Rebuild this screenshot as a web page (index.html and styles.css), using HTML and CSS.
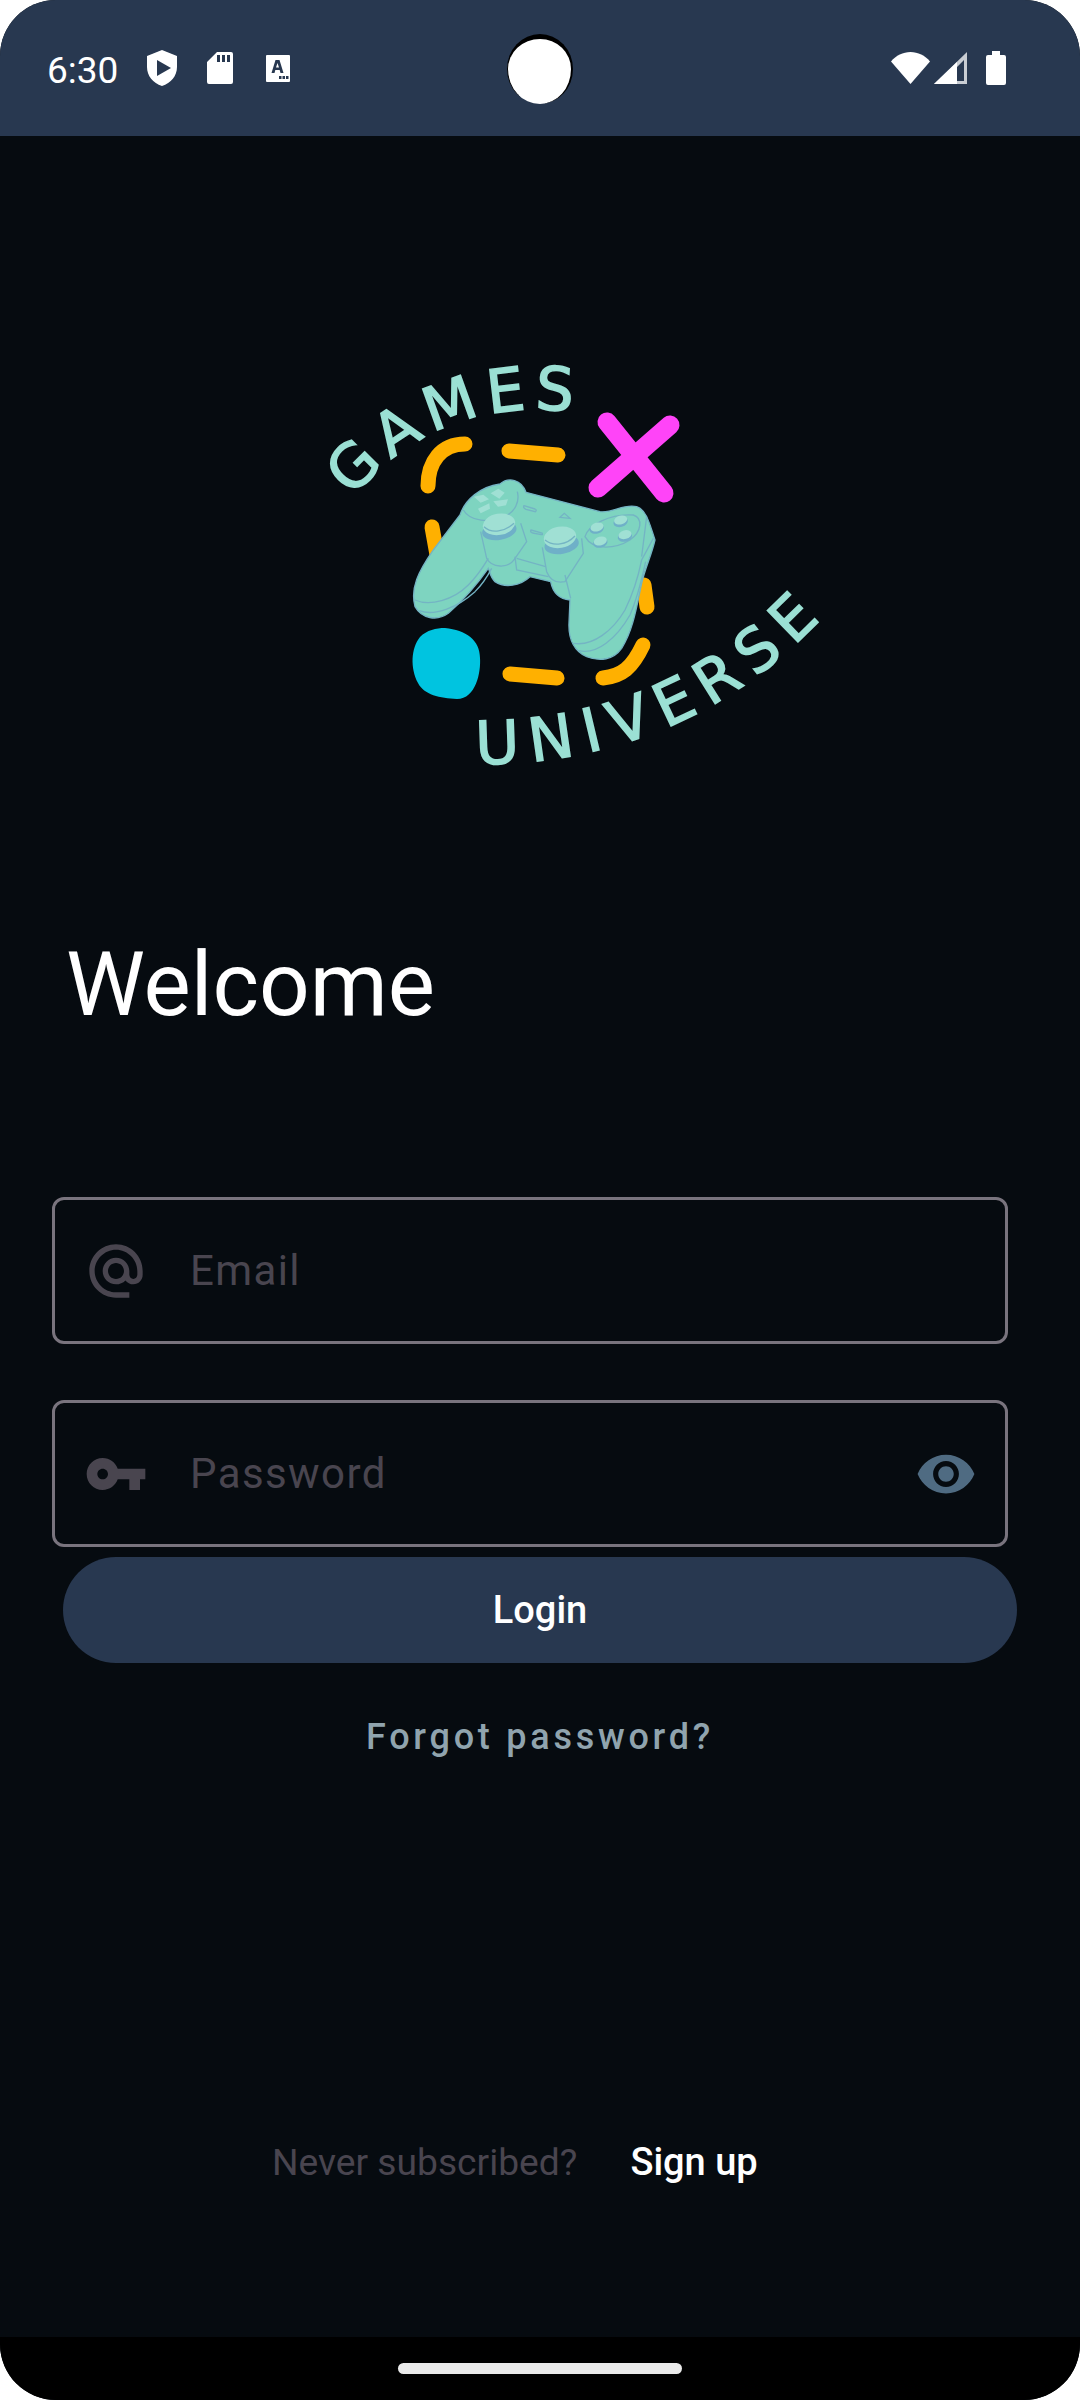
FILE: index.html
```html
<!DOCTYPE html>
<html lang="en">
<head>
    <meta charset="UTF-8">
    <meta name="viewport" content="width=device-width, initial-scale=1.0">
    <title>Games Universe Login</title>
    <link rel="stylesheet" href="styles.css">
</head>
<body>

<div class="phone">
    <!-- Status bar -->
    <div class="status-bar">
        <div class="status-left">
            <span class="clock">6:30</span>
            <svg class="icon-shield" viewBox="0 0 30 36"><path fill="#fff" fill-rule="evenodd" d="M15 0L30 6V17C30 26 24 33 15 36C6 33 0 26 0 17V6ZM10 10V26L24 18Z"/></svg>
            <svg class="icon-sd" viewBox="0 0 26 32"><path fill="#fff" fill-rule="evenodd" d="M10 0H24Q26 0 26 2V30Q26 32 24 32H2Q0 32 0 30V10ZM10 3V10H13V3ZM15 3V10H18V3ZM20 3V10H23V3Z"/></svg>
            <svg class="icon-a" viewBox="0 0 24 27"><path fill="#fff" fill-rule="evenodd" d="M1 0H23Q24 0 24 1V26Q24 27 23 27H1Q0 27 0 26V1Q0 0 1 0ZM9.500 5L5.500 18H8.500L9.300 15H13.700L14.500 18H17.500L13.500 5ZM11.500 8L13 12.500H10ZM13 21V24H15.500V21ZM16.500 21V24H19V21ZM20 21V24H22.500V21Z"/></svg>
        </div>
        <div class="camera"></div>
        <div class="status-right">
            <svg class="icon-wifi" viewBox="0 0 39 32"><path fill="#fff" d="M19.500 32L0 9.500C5 3.500 12 0 19.500 0S34 3.500 39 9.500Z"/></svg>
            <svg class="icon-signal" viewBox="0 0 33 32"><path fill="#fff" fill-opacity=".75" fill-rule="evenodd" d="M33 0V32H0ZM30 8L23 15V29H30Z"/><path fill="#fff" d="M23 10V32H0Z"/></svg>
            <svg class="icon-battery" viewBox="0 0 20 34"><path fill="#fff" d="M6 0H14V4H18Q20 4 20 6V32Q20 34 18 34H2Q0 34 0 32V6Q0 4 2 4H6Z"/></svg>
        </div>
    </div>

    <div class="content">
        <!-- Logo -->
        <svg class="logo" viewBox="320 350 510 420">
            <defs>
                <path id="arcTop" d="M352 498Q440 395 575 412"/>
                <path id="arcBottom" d="M476 764Q680 765 818 622"/>
            </defs>
            <text class="logo-text"><textPath href="#arcTop" textLength="248" lengthAdjust="spacing">GAMES</textPath></text>
            <text class="logo-text"><textPath href="#arcBottom" textLength="385" lengthAdjust="spacing">UNIVERSE</textPath></text>

            <g class="dashes">
                <path d="M428 486C428 462 441 444 465 444"/>
                <path d="M509 451L558 455"/>
                <path d="M432 527L437 555"/>
                <path d="M644 585L647 607"/>
                <path d="M643 645C632 668 622 676 603 678"/>
                <path d="M510 674L557 678"/>
            </g>

            <path class="blob" d="M445 628C466 630 480 640 480 658C481 672 476 699 457 699C440 698 424 695 418 683C410 668 411 648 420 637C427 630 436 628 445 628Z"/>

            <g class="cross">
                <path d="M607 422L664 493"/>
                <path d="M670 425L598 488"/>
            </g>

            <!-- Controller, drawn in zoomed coordinates -->
            <g transform="translate(380 460) scale(.3333)">
                <path class="pad-body" d="M360 72C385 50 425 58 438 97L660 155C700 160 730 130 770 140C795 148 805 175 825 240C815 285 795 325 785 370C770 440 760 510 725 565C700 600 660 605 620 590C585 575 565 540 567 490L570 420C545 418 520 405 512 365L450 350C420 378 375 385 345 365C330 350 330 335 325 325C290 375 250 420 205 460C170 485 125 475 105 440C90 385 115 335 160 270L240 165C255 120 300 80 360 72Z"/>
                <g class="pad-line">
                    <path d="M250 150C270 185 330 190 375 170C405 155 420 125 412 95"/>
                    <path d="M105 420C150 440 220 420 265 375C290 350 310 320 325 295"/>
                    <path d="M118 452C165 470 235 440 285 395C305 375 322 350 335 325"/>
                    <path d="M580 550C640 560 700 510 735 450C760 400 775 350 785 300L820 235"/>
                    <path d="M597 572C650 585 710 535 750 465C770 420 785 360 797 305"/>
                    <path d="M302 215L320 295C335 325 385 325 402 300L440 245L422 190"/>
                    <path d="M405 290L410 330L505 350"/>
                    <path d="M410 295L497 320"/>
                    <path d="M487 262L500 335C510 360 530 370 555 365L610 280L605 235"/>
                    <path d="M555 345L572 415"/>
                    <path d="M615 230C625 195 690 160 760 165C790 175 785 215 750 240C710 265 640 275 615 230Z"/>
                    <path d="M800 170L785 290"/>
                    <path d="M432 137L465 147Q472 150 466 155L438 148Q428 143 432 137Z"/>
                    <path d="M453 210L486 219Q490 225 484 224L458 219Q449 215 453 210Z"/>
                    <path d="M540 172L553 160L570 175Z"/>
                </g>
                <g class="pad-shadow">
                    <ellipse cx="358" cy="212" rx="52" ry="28" transform="rotate(-10 358 212)"/>
                    <ellipse cx="545" cy="254" rx="52" ry="28" transform="rotate(-10 545 254)"/>
                    <ellipse cx="650" cy="206" rx="22" ry="15" transform="rotate(-15 650 206)"/>
                    <ellipse cx="722" cy="186" rx="22" ry="15" transform="rotate(-15 722 186)"/>
                    <ellipse cx="661" cy="248" rx="22" ry="15" transform="rotate(-15 661 248)"/>
                    <ellipse cx="735" cy="230" rx="22" ry="15" transform="rotate(-15 735 230)"/>
                </g>
                <g class="pad-light">
                    <ellipse cx="357" cy="193" rx="49" ry="32" transform="rotate(-10 357 193)"/>
                    <ellipse cx="540" cy="232" rx="49" ry="32" transform="rotate(-10 540 232)"/>
                    <ellipse cx="651" cy="201" rx="20" ry="13" transform="rotate(-15 651 201)"/>
                    <ellipse cx="722" cy="180" rx="20" ry="13" transform="rotate(-15 722 180)"/>
                    <ellipse cx="661" cy="243" rx="20" ry="13" transform="rotate(-15 661 243)"/>
                    <ellipse cx="735" cy="224" rx="20" ry="13" transform="rotate(-15 735 224)"/>
                    <path d="M332 100L355 86L374 98L358 116Z"/>
                    <path d="M282 110L310 104L327 118L302 128Z"/>
                    <path d="M340 124L384 118L378 136L354 140Z"/>
                    <path d="M294 146L328 130L330 146L302 160Z"/>
                </g>
                <g class="pad-line">
                    <path d="M312 200C335 222 375 215 402 190"/>
                    <path d="M495 240C520 260 560 255 585 228"/>
                </g>
            </g>
        </svg>

        <h1 class="welcome">Welcome</h1>

        <!-- Login form -->
        <form class="login-form">
            <div class="field">
                <svg class="field-icon" viewBox="0 0 24 24"><path fill="#49454f" d="M12 2C6.480 2 2 6.480 2 12s4.480 10 10 10h5v-2h-5c-4.340 0-8-3.660-8-8s3.660-8 8-8 8 3.660 8 8v1.430c0 .79-.71 1.570-1.500 1.570s-1.500-.78-1.500-1.570V12c0-2.760-2.240-5-5-5s-5 2.240-5 5 2.240 5 5 5c1.380 0 2.640-.56 3.540-1.470.65.89 1.770 1.470 2.960 1.470 1.970 0 3.500-1.600 3.500-3.570V12c0-5.520-4.480-10-10-10zm0 13c-1.660 0-3-1.340-3-3s1.340-3 3-3 3 1.340 3 3-1.340 3-3 3z"/></svg>
                <span class="placeholder">Email</span>
            </div>
            <div class="field field-password">
                <svg class="field-icon" viewBox="0 0 24 24"><path fill="#49454f" d="M12.650 10C11.830 7.670 9.610 6 7 6c-3.310 0-6 2.690-6 6s2.690 6 6 6c2.610 0 4.830-1.670 5.650-4H17v4h4v-4h2v-4H12.650zM7 14c-1.100 0-2-.9-2-2s.9-2 2-2 2 .9 2 2-.9 2-2 2z"/></svg>
                <span class="placeholder">Password</span>
                <svg class="eye-icon" viewBox="0 0 24 24"><path fill="#4f6b82" d="M12 4.500C7 4.500 2.730 7.610 1 12c1.730 4.390 6 7.500 11 7.500s9.270-3.110 11-7.500c-1.730-4.390-6-7.500-11-7.500zM12 17c-2.760 0-5-2.240-5-5s2.240-5 5-5 5 2.240 5 5-2.240 5-5 5zm0-8c-1.660 0-3 1.340-3 3s1.340 3 3 3 3-1.340 3-3-1.340-3-3-3z"/></svg>
            </div>
            <button type="button" class="login-button">Login</button>
            <div class="forgot">Forgot password?</div>
        </form>

        <div class="signup">
            <span class="signup-hint">Never subscribed?</span>
            <span class="signup-link">Sign up</span>
        </div>
    </div>

    <!-- Gesture bar -->
    <div class="nav-bar">
        <div class="nav-pill"></div>
    </div>
</div>

</body>
</html>
```

FILE: styles.css
```css
* {
    box-sizing: border-box;
}
body {
    margin: 0;
    background-color: #fff;
    font-family: Roboto, Arial, sans-serif;
}
.phone {
    display: flex;
    flex-direction: column;
    width: 1080px;
    height: 2400px;
    border-radius: 56px;
    overflow: hidden;
    background-color: #060b10;
}

/* Status bar */
.status-bar {
    position: relative;
    display: flex;
    flex: 0 0 136px;
    align-items: center;
    justify-content: space-between;
    padding: 0 74px 0 47px;
    background-color: #283850;
    color: #fff;
}
.status-left {
    display: flex;
    align-items: center;
}
.status-right {
    display: flex;
    align-items: center;
}
.clock {
    width: 100px;
    margin-top: 4px;
    font-size: 37px;
    font-weight: 400;
}
.icon-shield {
    width: 30px;
    height: 36px;
    margin-right: 30px;
}
.icon-sd {
    width: 26px;
    height: 32px;
    margin-right: 33px;
}
.icon-a {
    width: 24px;
    height: 27px;
}
.icon-wifi {
    width: 39px;
    height: 32px;
    margin-right: 4px;
}
.icon-signal {
    width: 33px;
    height: 32px;
    margin-right: 19px;
}
.icon-battery {
    width: 20px;
    height: 34px;
}
.camera {
    position: absolute;
    left: 507px;
    top: 34px;
    width: 66px;
    height: 70px;
    border-top: 5px solid #000;
    border-left: 1px solid #000;
    border-right: 2px solid #000;
    border-radius: 50%;
    background-color: #fff;
}

/* Main content */
.content {
    flex: 1;
    display: flex;
    flex-direction: column;
}
.logo {
    display: block;
    width: 510px;
    height: 420px;
    margin: 214px 0 0 320px;
    overflow: visible;
}
.logo-text {
    font-family: "DejaVu Sans", sans-serif;
    font-size: 60px;
    fill: #9be0d4;
    stroke: #9be0d4;
    stroke-width: 1.500;
}
.dashes path {
    fill: none;
    stroke: #ffb000;
    stroke-width: 15;
    stroke-linecap: round;
}
.blob {
    fill: #00c4e0;
}
.cross path {
    fill: none;
    stroke: #ff44f8;
    stroke-width: 19;
    stroke-linecap: round;
}
.pad-body {
    fill: #7ed4c0;
    stroke: #74b4c4;
    stroke-width: 4;
}
.pad-line path {
    fill: none;
    stroke: #74b4c4;
    stroke-width: 4;
}
.pad-shadow {
    fill: #6fb0c8;
}
.pad-light {
    fill: #a0e0d4;
}
.welcome {
    margin: 163px 0 0 66px;
    font-size: 89px;
    font-weight: 400;
    line-height: 104px;
    color: #fff;
}

/* Login form */
.login-form {
    display: flex;
    flex-direction: column;
    margin-top: 160px;
}
.field {
    display: flex;
    align-items: center;
    width: 956px;
    height: 147px;
    margin-left: 52px;
    padding-left: 29px;
    border: 3px solid #79747e;
    border-radius: 12px;
}
.field-password {
    margin-top: 56px;
}
.field-icon {
    width: 64px;
    height: 64px;
    margin-right: 42px;
}
.placeholder {
    font-size: 42px;
    letter-spacing: 1.400px;
    color: #49454f;
}
.eye-icon {
    width: 62px;
    height: 62px;
    margin-left: auto;
    margin-right: 28px;
}
.login-button {
    width: 954px;
    height: 106px;
    margin: 10px 0 0 63px;
    border: none;
    border-radius: 53px;
    background-color: #283850;
    color: #fff;
    font-family: Roboto, Arial, sans-serif;
    font-size: 38px;
    font-weight: 500;
}
.forgot {
    margin-top: 53px;
    text-align: center;
    font-size: 36px;
    font-weight: 500;
    letter-spacing: 3.750px;
    color: #90a4ae;
}
.signup {
    display: flex;
    align-items: center;
    margin: 382px 0 0 272px;
}
.signup-hint {
    font-size: 37.200px;
    color: #49454f;
}
.signup-link {
    margin-left: 53px;
    font-size: 38px;
    font-weight: 500;
    color: #fff;
}

/* Gesture bar */
.nav-bar {
    display: flex;
    flex: 0 0 63px;
    justify-content: center;
    padding-top: 26px;
    background-color: #000;
}
.nav-pill {
    width: 284px;
    height: 11px;
    border-radius: 6px;
    background-color: #eaeaea;
}
```
